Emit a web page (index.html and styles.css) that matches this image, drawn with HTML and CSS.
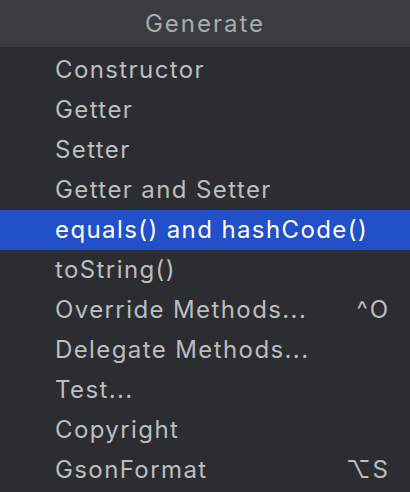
FILE: index.html
```html
<!DOCTYPE html>
<html>
<head>
<meta charset="utf-8">
<link rel="stylesheet" href="styles.css">
</head>
<body>
<div class="popup">
  <div class="header">Generate</div>
  <ul class="list">
    <li class="item"><span>Constructor</span></li>
    <li class="item"><span>Getter</span></li>
    <li class="item"><span>Setter</span></li>
    <li class="item"><span>Getter and Setter</span></li>
    <li class="item selected"><span>equals() and hashCode()</span></li>
    <li class="item"><span>toString()</span></li>
    <li class="item"><span>Override Methods...</span><span class="key">^O</span></li>
    <li class="item"><span>Delegate Methods...</span></li>
    <li class="item"><span>Test...</span></li>
    <li class="item"><span>Copyright</span></li>
    <li class="item"><span>GsonFormat</span><span class="key">⌥S</span></li>
  </ul>
</div>
</body>
</html>
```

FILE: styles.css
```css
html, body {
  margin: 0;
  padding: 0;
  background: #2b2d30;
}
.popup {
  width: 410px;
  height: 492px;
  background: #2b2d30;
  font-family: Inter, "Noto Sans", sans-serif;
  overflow: hidden;
}
.header {
  height: 47px;
  background: #3a3d40;
  color: #a9abad;
  font-size: 24px;
  letter-spacing: 2px;
  display: flex;
  align-items: center;
  justify-content: center;
  padding-bottom: 1px;
  box-sizing: border-box;
}
.list {
  list-style: none;
  margin: 0;
  padding: 3px 0 0 0;
}
.item {
  height: 40px;
  display: flex;
  align-items: center;
  justify-content: space-between;
  padding: 0 22px 2px 55px;
  box-sizing: border-box;
  color: #bcbdbf;
  font-size: 24px;
  letter-spacing: 1.4px;
}
.item.selected {
  background: #2150c8;
  color: #ffffff;
}
.key {
  color: #bcbdbf;
  letter-spacing: 2px;
  margin-right: -2px;
}
```
